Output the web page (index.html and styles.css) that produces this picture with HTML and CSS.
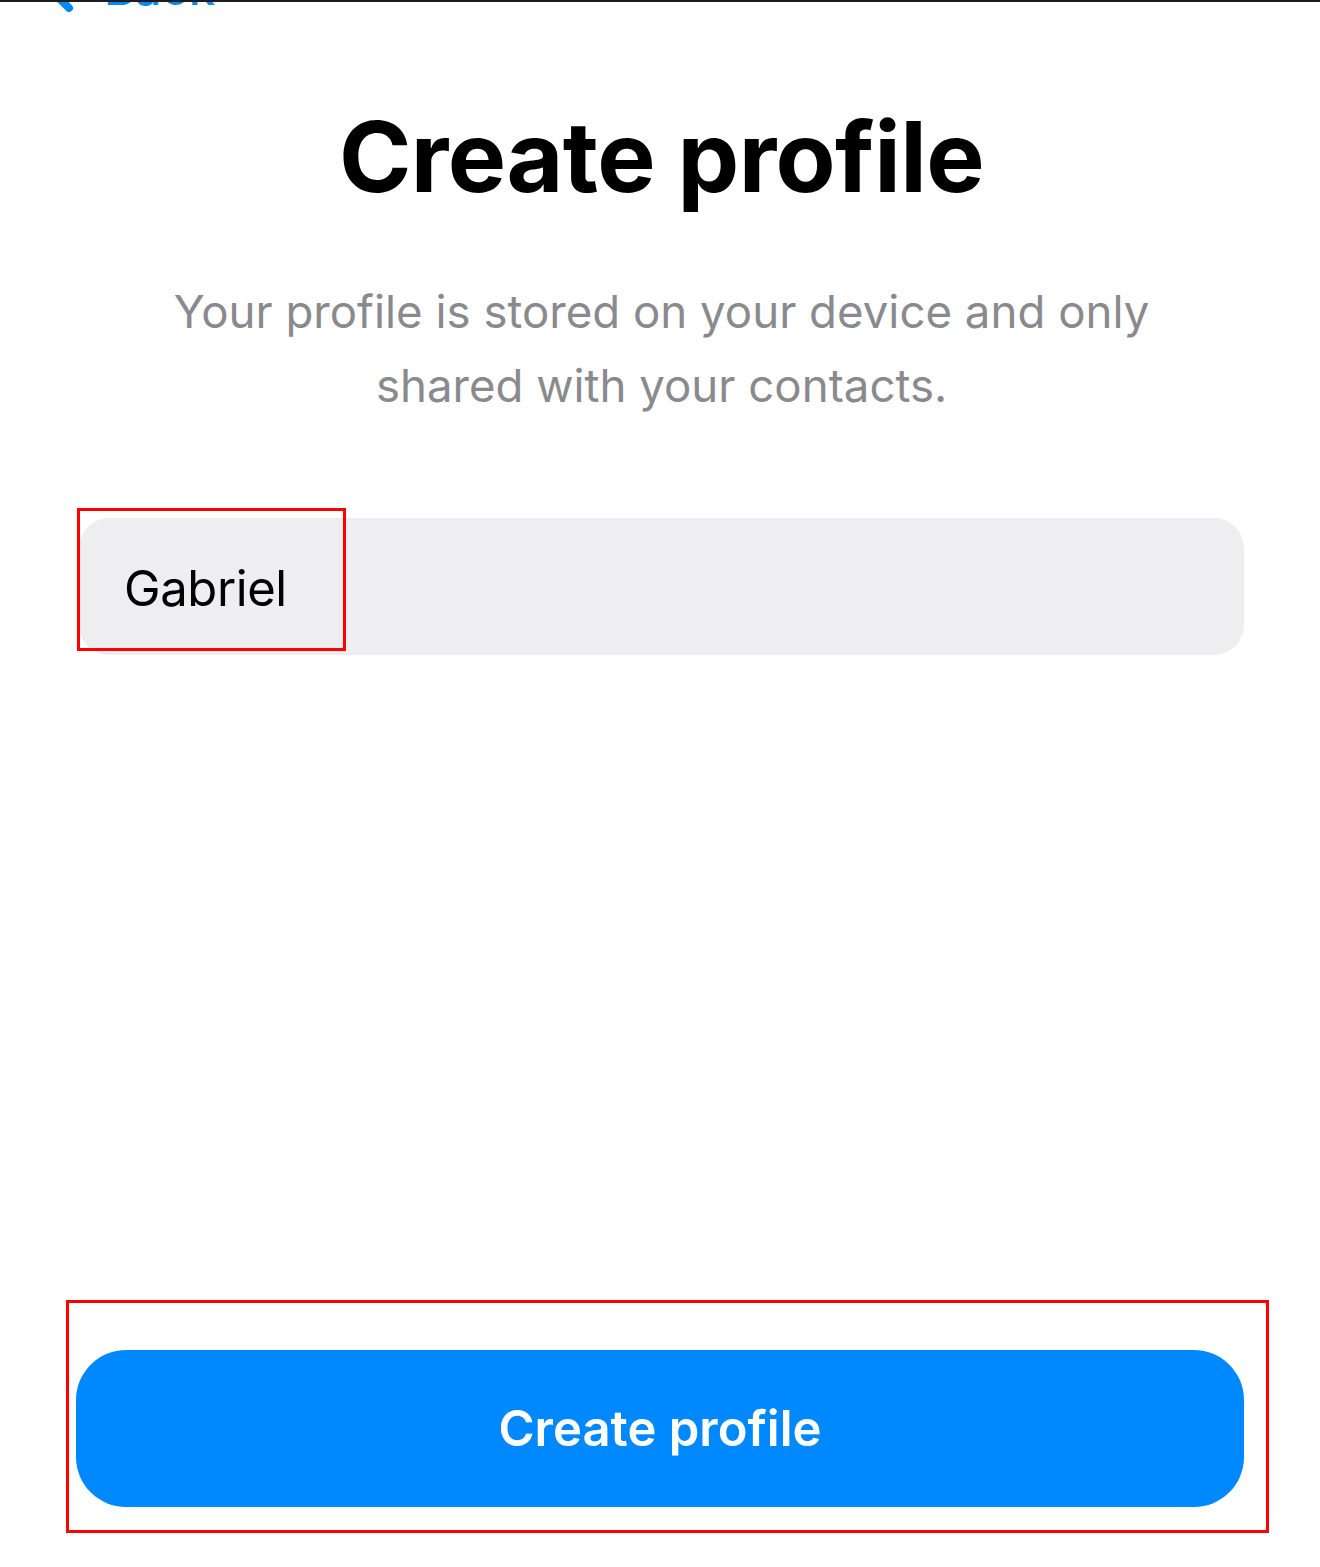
FILE: index.html
```html
<!DOCTYPE html>
<html lang="en">
<head>
    <meta charset="UTF-8">
    <meta name="viewport" content="width=device-width, initial-scale=1.0">
    <title>Create profile</title>
    <link rel="stylesheet" href="styles.css">
</head>
<body>
    <div class="screen">
        <header class="nav-bar">
            <a class="back-link" href="#">
                <svg class="back-chevron" width="40" height="60" viewBox="0 0 40 60">
                    <polyline points="26,19 8,37 25,54" fill="none" stroke="currentColor" stroke-width="8" stroke-linecap="round" stroke-linejoin="round"/>
                </svg>
                <span class="back-label">Back</span>
            </a>
        </header>

        <main class="content">
            <h1 class="title">Create profile</h1>
            <p class="subtitle">Your profile is stored on your device and only shared with your contacts.</p>

            <div class="name-field">
                <span class="name-value">Gabriel</span>
                <span class="highlight highlight-name"></span>
            </div>
        </main>

        <footer class="actions">
            <button class="primary-button">
                Create profile
                <span class="highlight highlight-button"></span>
            </button>
        </footer>
    </div>
</body>
</html>
```

FILE: styles.css
```css
body {
    margin: 0;
    padding: 0;
    background: #fff;
    font-family: 'Inter', 'Noto Sans', sans-serif;
    color: #000;
}

.screen {
    display: flex;
    flex-direction: column;
    min-height: 100vh;
    box-sizing: border-box;
}

/* Navigation */
.nav-bar {
    height: 14px;
    border-top: 2px solid #1c1c1e;
    box-sizing: border-box;
    overflow: hidden;
    display: flex;
    align-items: flex-end;
    padding-left: 44px;
}

.back-link {
    display: flex;
    align-items: flex-end;
    gap: 20px;
    color: #0088ff;
    text-decoration: none;
    height: 60px;
}

.back-chevron {
    display: block;
    flex-shrink: 0;
}

.back-label {
    font-size: 47px;
    font-weight: 500;
    line-height: 1;
    margin-bottom: 3px;
}

/* Content */
.content {
    flex: 1;
    padding: 0 76px 0 79px;
}

.title {
    margin: 94px 0 0;
    font-size: 98px;
    font-weight: 700;
    line-height: 1;
    letter-spacing: -0.6px;
    text-align: center;
}

.subtitle {
    margin: 69px auto 0;
    max-width: 1000px;
    font-size: 45.6px;
    line-height: 74px;
    color: #8a8a8e;
    text-align: center;
}

.name-field {
    position: relative;
    margin-top: 95px;
    height: 137px;
    background: #eeeef0;
    border-radius: 30px;
    display: flex;
    align-items: center;
    padding-left: 45px;
}

.name-value {
    font-size: 49px;
    letter-spacing: -0.4px;
    margin-top: 3px;
}

/* Actions */
.actions {
    padding: 0 76px 60px;
}

.primary-button {
    position: relative;
    display: block;
    width: 100%;
    height: 157px;
    border: none;
    border-radius: 50px;
    background: #0088ff;
    color: #fff;
    font-family: inherit;
    font-size: 49px;
    font-weight: 600;
    cursor: pointer;
}

/* Annotation boxes */
.highlight {
    position: absolute;
    border: 3px solid #ff0000;
    box-sizing: border-box;
    pointer-events: none;
}

.highlight-name {
    left: -2px;
    top: -10px;
    width: 269px;
    height: 143px;
}

.highlight-button {
    left: -10px;
    top: -50px;
    right: -25px;
    bottom: -26px;
}
```
